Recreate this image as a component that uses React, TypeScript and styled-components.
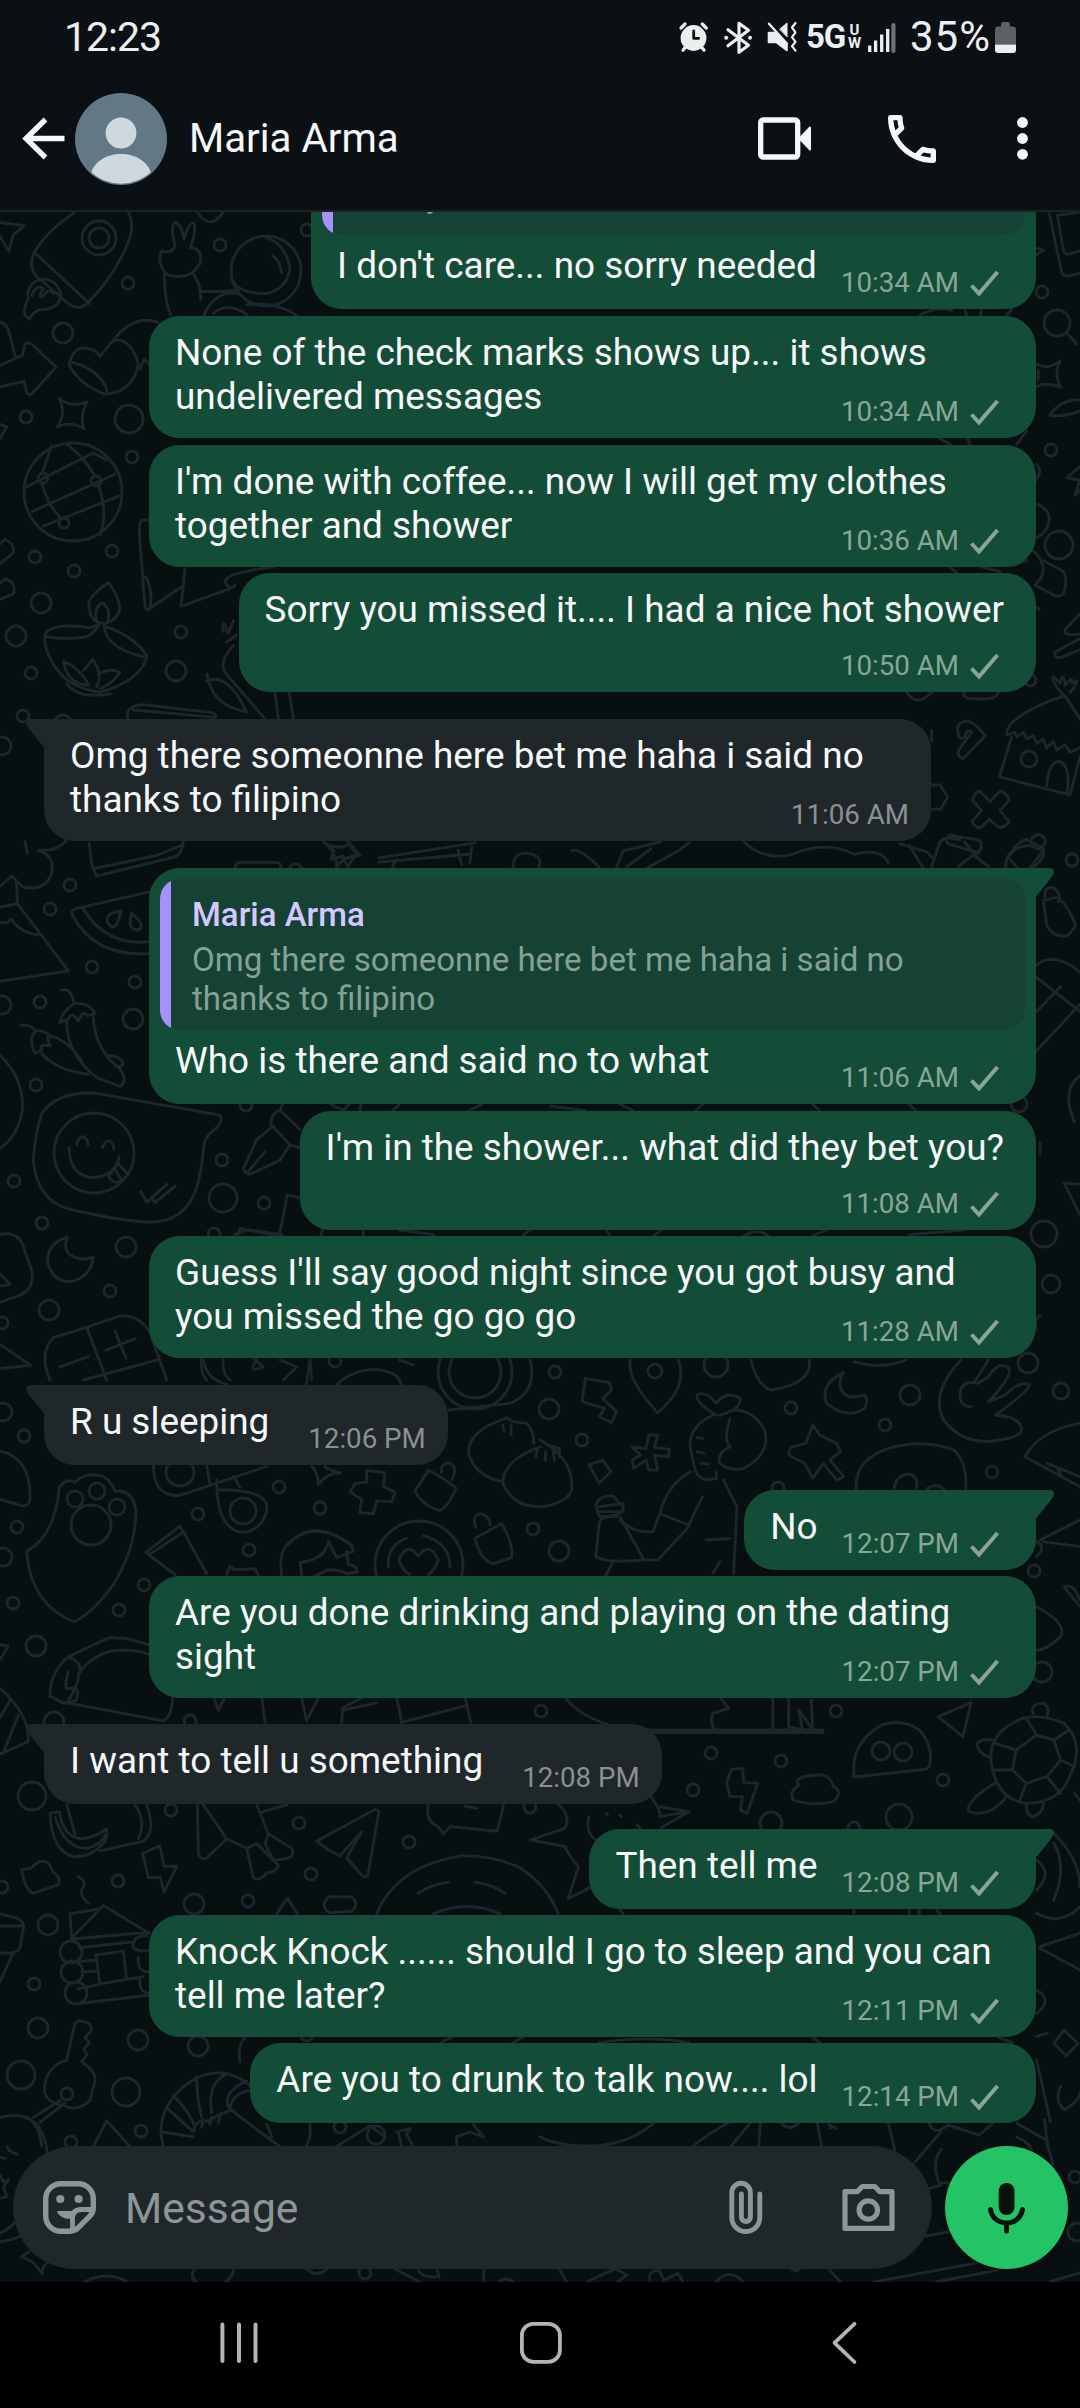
import React from "react";
import styled, { createGlobalStyle, css } from "styled-components";

const color = {
  bar: "#0b1014",
  line: "#1b2226",
  wall: "#070f10",
  doodle: "#1f262b",
  sent: "#144d37",
  received: "#1f272a",
  quote: "#154234",
  accent: "#a791ff",
  quoteName: "#d3c8ff",
  sentMeta: "#88a698",
  receivedMeta: "#8b9092",
  white: "#f7f8fa",
  inputIcon: "#8d9598",
  green: "#24c366",
};

const GlobalStyle = createGlobalStyle`
  * { box-sizing: border-box; }
  body { margin: 0; background: #000; font-family: Roboto, "Liberation Sans", sans-serif; }
  svg { display: block; flex: none; }
`;

const Screen = styled.main`
  display: flex;
  flex-direction: column;
  width: 1080px;
  height: 2408px;
  overflow: hidden;
`;

/* ---------- status bar ---------- */

const TopArea = styled.header`
  flex: none;
  height: 212px;
  background: ${color.bar};
  border-bottom: 2px solid ${color.line};
`;

const StatusBar = styled.div`
  display: flex;
  align-items: center;
  justify-content: space-between;
  height: 74px;
  padding: 0 64px 0 64px;
  color: #eceeef;
`;

const Clock = styled.span`
  font-size: 41px;
  line-height: 48px;
  letter-spacing: -1px;
`;

const Battery = styled.span`
  margin-left: 14px;
  margin-right: 4px;
  font-size: 42px;
  line-height: 48px;
  letter-spacing: 1px;
  white-space: nowrap;
`;

const StatusIcons = styled.div`
  display: flex;
  align-items: center;
`;

const Network = styled.div`
  display: flex;
  align-items: center;
  margin-left: 10px;
  margin-right: 6px;
`;

const NetworkName = styled.span`
  font-size: 33px;
  font-weight: 700;
  line-height: 34px;
  letter-spacing: -1.2px;
`;

const NetworkSuffix = styled.span`
  display: flex;
  flex-direction: column;
  align-items: center;
  width: 15px;
  margin-left: 2px;
  font-size: 15px;
  font-weight: 700;
  line-height: 13px;
`;

/* ---------- conversation header ---------- */

const ContactBar = styled.div`
  display: flex;
  align-items: center;
  height: 129px;
  padding: 0 52px 0 23px;
`;

const ContactName = styled.h1`
  flex: 1;
  margin: 0 0 0 22px;
  color: ${color.white};
  font-size: 40.3px;
  font-weight: 400;
  line-height: 48px;
`;

const Actions = styled.div`
  display: flex;
  align-items: center;
`;

/* ---------- conversation ---------- */

const Conversation = styled.section`
  position: relative;
  display: flex;
  flex-direction: column;
  flex: none;
  height: 2070px;
  overflow: hidden;
  background: ${color.wall};
`;

const WallpaperSvg = styled.svg`
  position: absolute;
  inset: 0;
  fill: none;
  stroke: ${color.doodle};
  stroke-width: 2.9;
  stroke-linecap: round;
  stroke-linejoin: round;
  path { vector-effect: non-scaling-stroke; }
`;

const Messages = styled.div`
  position: relative;
  display: flex;
  flex: 1;
  flex-direction: column;
  justify-content: flex-end;
  min-height: 0;
  padding: 0 44px 23px;
`;

const Bubble = styled.article<{ $sent: boolean; $wide: boolean; $tail: boolean; $gap: number }>`
  position: relative;
  flex: none;
  align-self: ${(p) => (p.$sent ? "flex-end" : "flex-start")};
  width: ${(p) => (p.$wide ? "887px" : "auto")};
  margin-top: ${(p) => p.$gap}px;
  border-radius: 31px;
  background: ${(p) => (p.$sent ? color.sent : color.received)};
  ${(p) => p.$tail && (p.$sent ? css`border-top-right-radius: 0;` : css`border-top-left-radius: 0;`)}
`;

const Tail = styled.svg<{ $sent: boolean }>`
  position: absolute;
  top: 0;
  ${(p) =>
    p.$sent
      ? css`left: 100%; margin-left: -1px; fill: ${color.sent};`
      : css`right: 100%; margin-right: -1px; fill: ${color.received}; transform: scaleX(-1);`}
`;

const QuoteHolder = styled.div`
  padding: 11px 11px 0;
`;

const Quote = styled.blockquote`
  margin: 0;
  padding: 17px 20px 12px 32px;
  border-radius: 20px;
  background: linear-gradient(to right, ${color.accent} 11px, ${color.quote} 11px);
`;

const QuoteName = styled.div`
  color: ${color.quoteName};
  font-size: 33px;
  font-weight: 500;
  line-height: 38px;
`;

const QuoteText = styled.p<{ $lines: number }>`
  margin: 6px 0 ${(p) => (p.$lines === 1 ? 8 : 0)}px;
  color: #84a193;
  font-size: 33.1px;
  line-height: 39px;
  white-space: pre-line;
`;

type Layout = "inline" | "stack";

const Body = styled.div<{ $quoted: boolean; $sent: boolean }>`
  display: flex;
  flex-direction: column;
  padding: ${(p) => (p.$quoted ? 9 : 15)}px ${(p) => (p.$sent ? 32 : 17)}px 10px 26px;
`;

const Line = styled.span`
  color: ${color.white};
  font-size: 36.9px;
  line-height: 44px;
  white-space: pre;
`;

const LastRow = styled.div<{ $layout: Layout; $sent: boolean; $multiline: boolean }>`
  display: flex;
  flex-direction: ${(p) => (p.$layout === "stack" ? "column" : "row")};
  justify-content: space-between;
  gap: ${(p) => (p.$layout === "stack" ? 18 : p.$sent ? 24 : 39)}px;
  height: ${(p) => (p.$layout === "stack" ? "auto" : p.$multiline ? "53px" : "55px")};
`;

const Meta = styled.div<{ $sent: boolean }>`
  display: flex;
  align-self: flex-end;
  align-items: center;
  gap: 11px;
  height: 32px;
  margin-right: 5px;
  color: ${(p) => (p.$sent ? color.sentMeta : color.receivedMeta)};
  font-size: 27.7px;
  line-height: 32px;
  white-space: nowrap;
`;

/* ---------- composer ---------- */

const Composer = styled.footer`
  position: relative;
  display: flex;
  flex: none;
  align-items: center;
  gap: 13px;
  height: 136px;
  padding: 0 12px 13px 13px;
`;

const InputPill = styled.div`
  display: flex;
  flex: none;
  align-items: center;
  width: 919px;
  height: 123px;
  padding: 0 37px 0 30px;
  border-radius: 62px;
  background: ${color.received};
`;

const Placeholder = styled.span`
  flex: 1;
  margin-left: 29px;
  color: ${color.inputIcon};
  font-size: 42.6px;
  line-height: 50px;
`;

const MicButton = styled.button`
  display: flex;
  align-items: center;
  justify-content: center;
  width: 123px;
  height: 123px;
  padding: 0;
  border: 0;
  border-radius: 50%;
  background: ${color.green};
  box-shadow: 0 2px 5px rgba(0, 0, 0, 0.4);
`;

const NavBar = styled.nav`
  display: flex;
  flex: 1;
  align-items: center;
  gap: 262px;
  padding: 0 0 5px 220px;
  background: #000;
`;

/* ---------- icons ---------- */

const IconSvg = styled.svg<{ $ml?: number }>`
  margin-left: ${(p) => p.$ml ?? 0}px;
  overflow: visible;
`;

type IconProps = { box: [number, number, number, number]; ml?: number; children: React.ReactNode };
const Icon = ({ box, ml, children }: IconProps) => (
  <IconSvg $ml={ml} width={box[2]} height={box[3]} viewBox={box.join(" ")} fill="none" strokeLinecap="round" strokeLinejoin="round">
    {children}
  </IconSvg>
);

const ink = "#eceeef";

const AlarmIcon = () => (
  <Icon box={[676, 22, 29, 30]}>
    <circle cx="690.5" cy="38" r="12.9" fill={ink} />
    <path d="M678 28l4-4M703.3 28l-4-4M680 50.3l3-4M701 50.3l-3-4" stroke={ink} strokeWidth="3.2" />
    <path d="M690.7 31v7.3h5" stroke={color.bar} strokeWidth="2.8" />
  </Icon>
);

const BluetoothIcon = () => (
  <Icon box={[721, 21, 28, 31]} ml={16}>
    <path d="M725 28.7l20.5 15.6-9.5 6.9V22.3l9.5 6.9L725 44.8" stroke={ink} strokeWidth="3.2" />
    <circle cx="723.2" cy="36.8" r="2" fill={ink} />
    <circle cx="747" cy="36.8" r="2" fill={ink} />
  </Icon>
);

const MuteIcon = () => (
  <Icon box={[764, 22, 29, 30]} ml={15}>
    <path d="M765.5 32.5h7l11.5 12v6l-10.5-8h-8z" fill={ink} stroke={ink} strokeWidth="1.6" />
    <path d="M777 29l7-6v13.5z" fill={ink} stroke={ink} strokeWidth="1" />
    <path d="M766 23.7l18 20" stroke={ink} strokeWidth="2.4" />
    <path d="M792.5 23l-3.5 4.5 3.5 4.8-3.5 4.8 3.5 4.8-3.5 4.2 3.5 4.6" stroke={ink} strokeWidth="2.2" />
  </Icon>
);

const SignalIcon = () => (
  <Icon box={[864.4, 22, 28, 29]}>
    <path d="M866.1 51v-6.4M872 51V39.5M878.1 51V33.5M884.1 51V28" stroke={ink} strokeWidth="3.3" strokeLinecap="butt" />
    <path d="M889.8 50V24" stroke="#6e7274" strokeWidth="4.2" />
  </Icon>
);

const BatteryIcon = () => (
  <Icon box={[995, 21.5, 21, 31]}>
    <path d="M1001 26v-2q0-2.5 2.5-2.5h4q2.500 0 2.500 2.500v2h3q3 0 3 3v15h-21V29q0-3 3-3z" fill="#5d6163" />
    <path d="M995 44h21v5.5q0 3-3 3h-15q-3 0-3-3z" fill={ink} />
  </Icon>
);

const BackIcon = () => (
  <Icon box={[23, 117, 43, 43]}>
    <path d="M64.5 138.5H26M45.5 119.5l-19.5 19 19.5 19" stroke={color.white} strokeWidth="5.3" strokeLinecap="butt" strokeLinejoin="miter" />
  </Icon>
);

const Avatar = () => (
  <Icon box={[75, 92, 92, 92]} ml={9}>
    <clipPath id="avatarClip"><circle cx="121" cy="138" r="44.7" /></clipPath>
    <circle cx="121" cy="138" r="46" fill="#627884" />
    <circle cx="121" cy="132" r="15.4" fill="#cfd8df" />
    <path clipPath="url(#avatarClip)" d="M91 172c3-11 15-19 30-19s27 8 30 19v14H91z" fill="#cfd8df" />
  </Icon>
);

const VideoIcon = () => (
  <Icon box={[758, 117, 54, 43]}>
    <rect x="760.7" y="120" width="37" height="37" rx="2.5" stroke={color.white} strokeWidth="5.3" />
    <path d="M800 136.5l9-9.5q2-1.5 2 1v21q0 2.5-2 1l-9-9.5z" fill={color.white} />
  </Icon>
);

const PhoneIcon = () => (
  <Icon box={[888, 114, 48, 48]} ml={76}>
    <path
      transform="translate(880 106) scale(2.667)"
      fill={color.white}
      d="M6.54 5c.06.89.21 1.76.45 2.59l-1.2 1.2c-.41-1.2-.67-2.47-.76-3.79h1.51m9.86 12.02c.85.24 1.72.39 2.6.45v1.49c-1.32-.09-2.59-.35-3.8-.75l1.2-1.19M7.5 3H4c-.55 0-1 .45-1 1 0 9.39 7.61 17 17 17 .55 0 1-.45 1-1v-3.49c0-.55-.45-1-1-1-1.24 0-2.45-.2-3.57-.57-.1-.04-.21-.05-.31-.05-.26 0-.51.1-.71.29l-2.2 2.2c-2.83-1.45-5.15-3.76-6.59-6.59l2.2-2.2c.28-.28.36-.67.25-1.02C8.7 6.45 8.5 5.25 8.5 4c0-.55-.45-1-1-1z"
    />
  </Icon>
);

const MoreIcon = () => (
  <Icon box={[1017, 117, 11, 43]} ml={81}>
    {[122.5, 138.5, 154.3].map((y) => <circle key={y} cx="1022.5" cy={y} r="5.4" fill={color.white} />)}
  </Icon>
);

const Tick = () => (
  <Icon box={[0, 0, 29, 26]}>
    <path d="M1.5 15.5l7.5 8L27.5 2" stroke={color.sentMeta} strokeWidth="4" strokeLinecap="butt" strokeLinejoin="miter" />
  </Icon>
);

const StickerIcon = () => (
  <Icon box={[43, 2182, 53, 53]}>
    <g stroke={color.inputIcon} strokeWidth="5.4">
      <path d="M61 2184.7h17.3a15 15 0 0 1 15 15v9q0 5-3.5 8.5l-11.5 11.5q-3.6 3.6-8.5 3.6H61a15.3 15.3 0 0 1-15.3-15.3V2200A15.3 15.3 0 0 1 61 2184.7z" />
      <path d="M92.5 2210.5h-11q-9 0-9 9v11" strokeWidth="4.8" />
    </g>
    <circle cx="60.3" cy="2200" r="4.1" fill={color.inputIcon} />
    <circle cx="78.6" cy="2200" r="4.1" fill={color.inputIcon} />
    <path d="M58.5 2212h16l-3 7.5q-8.5 1.5-14-5.5-1-1.8 1-2z" fill={color.inputIcon} />
  </Icon>
);

const ClipIcon = () => (
  <Icon box={[729, 2181, 34, 53]}>
    <path d="M759.8 2194v23.5a14 14 0 0 1-28 0v-25a9.3 9.3 0 0 1 18.6 0V2217a4.5 4.5 0 0 1-9 0v-23" stroke={color.inputIcon} strokeWidth="4.9" />
  </Icon>
);

const CameraIcon = () => (
  <Icon box={[842, 2182, 53, 53]} ml={79}>
    <g stroke={color.inputIcon} strokeWidth="5.2">
      <path d="M845 2192.7h12.2l5-5.2h12.6l5 5.2H892v36.7h-47z" />
      <circle cx="868.3" cy="2211" r="9.2" />
    </g>
  </Icon>
);

const MicIcon = () => (
  <Icon box={[988, 2182, 37, 50]}>
    <rect x="998.7" y="2182" width="15.8" height="32" rx="7.9" fill="#06130d" />
    <path d="M990.5 2208.5c1.5 8.5 8 13.5 16 13.5s14.5-5 16-13.5M1006.5 2222v8" stroke="#06130d" strokeWidth="5" />
  </Icon>
);

const navInk = "#b4b4b4";
const RecentsIcon = () => (
  <Icon box={[220, 2322, 38, 42]}>
    <path d="M222.4 2324.5v36.5M239 2324.5v36.5M255.5 2324.5v36.5" stroke={navInk} strokeWidth="4" />
  </Icon>
);
const HomeIcon = () => (
  <Icon box={[520, 2322, 42, 42]}>
    <rect x="521.9" y="2323.8" width="38" height="38" rx="11.5" stroke={navInk} strokeWidth="3.8" />
  </Icon>
);
const NavBackIcon = () => (
  <Icon box={[824, 2322, 33, 42]}>
    <path d="M854.5 2323.8l-20 19 20 19.2" stroke={navInk} strokeWidth="3.8" />
  </Icon>
);

/* ---------- wallpaper ---------- */

const dots: [number, number, number][] = [
  [128, 283, 6], [63, 333, 10], [129, 419, 14], [26, 417, 6], [132, 457, 6], [35, 557, 6], [112, 551, 6], [74, 571, 6],
  [41, 603, 10], [16, 636, 10], [181, 632, 6], [31, 673, 6], [176, 671, 10], [23, 716, 6], [63, 724, 9], [220, 245, 6],
  [307, 230, 6], [73, 492, 49], [2, 746, 9], [99, 238, 17], [99, 238, 10], [266, 271, 35], [43, 478, 5], [96, 481, 5],
  [64, 523, 5], [70, 885, 6], [50, 909, 6], [92, 967, 6], [135, 982, 6], [40, 1002, 6], [133, 1019, 10], [36, 1085, 6],
  [222, 1160, 6], [223, 1198, 14], [264, 1203, 6], [14, 1181, 6], [42, 1223, 6], [126, 1247, 10], [110, 1291, 6],
  [49, 1310, 10], [2, 1005, 9], [214, 1234, 6], [2, 1323, 6], [246, 1105, 6], [94, 1153, 40], [335, 1361, 6],
  [24, 1436, 6], [17, 1527, 6], [198, 1514, 6], [279, 1487, 6], [320, 1508, 6], [249, 1550, 6], [144, 1585, 6],
  [13, 1603, 6], [119, 1610, 6], [36, 1646, 10], [3, 1557, 9], [3, 1412, 9], [54, 1722, 10], [190, 1721, 6],
  [32, 1796, 14], [171, 1810, 6], [299, 1823, 6], [409, 1842, 6], [311, 1874, 6], [118, 1881, 6], [194, 1904, 10],
  [248, 1901, 6], [48, 1925, 10], [34, 1984, 6], [38, 2028, 10], [138, 2040, 10], [198, 2046, 10], [21, 2075, 14],
  [126, 2092, 14], [141, 2131, 6], [71, 2142, 6], [180, 1472, 14], [243, 1511, 13], [419, 1565, 44], [2, 1887, 6],
  [307, 2035, 6], [376, 2135, 9], [340, 2127, 6], [75, 1499, 8], [97, 1491, 8], [117, 1507, 8], [91, 1525, 20],
  [71, 1952, 11], [72, 1972, 11], [76, 1993, 11], [67, 2094, 6], [1042, 292, 6], [1057, 323, 13], [1051, 450, 6],
  [1059, 545, 14], [1029, 759, 8], [1072, 860, 6], [1030, 680, 6], [582, 1440, 6], [549, 1409, 10], [555, 1372, 6],
  [655, 1371, 7], [791, 1408, 6], [910, 1395, 10], [885, 1425, 6], [992, 1472, 6], [1061, 1391, 8], [716, 1365, 12],
  [1028, 1363, 10], [533, 1529, 6], [559, 1551, 10], [1034, 1571, 6], [541, 1711, 6], [836, 1711, 6], [1042, 1672, 10],
  [778, 1488, 6], [711, 1753, 6], [781, 1761, 6], [693, 1790, 6], [943, 1780, 6], [899, 1817, 13], [854, 1828, 6],
  [881, 1751, 9], [903, 1752, 9], [530, 1807, 6], [771, 1823, 11], [1044, 1234, 13], [1051, 1284, 9], [1019, 1104, 8],
  [1075, 2177, 6], [1077, 2232, 9], [365, 2273, 6], [475, 1372, 26], [475, 1372, 37],
];

type Patch = { x: number; y: number; sx: number; sy: number; d: string[] };

const patches: Patch[] = [
  {
    x: 0, y: 210, sx: 3, sy: 2.8,
    d: [
      // rocket
      "M225 6Q140 60 103 118Q85 150 105 182L205 262Q240 285 265 258Q340 190 385 90Q405 40 385 6M103 118L268 262",
      "M105 200Q165 180 182 235Q180 275 135 278Q105 275 88 305Q60 290 85 250Q75 225 105 200M95 240Q110 205 130 220Q110 250 130 240Q150 215 160 235",
      "M0 35L73 44L40 70L26 115L0 75M590 5Q630 60 668 8",
      // astronaut
      "M512 295Q490 240 494 175Q470 140 485 115Q515 125 525 100Q510 40 525 35Q545 40 552 82Q565 35 580 36Q592 45 572 105Q610 110 600 150Q575 190 530 186Q505 185 494 175M580 178Q605 215 602 250M606 228H660L716 225M612 293Q650 220 716 235M700 200Q720 235 800 234Q860 220 870 165Q860 95 795 75M818 128Q840 140 845 175M640 290Q680 255 740 292M740 265Q830 255 890 295",
      // arrow, mug, star
      "M0 435L68 406L75 375Q85 370 95 375L168 440L95 515Q85 520 80 510L72 480L0 495M0 315Q20 315 28 345L45 408",
      "M213 415Q225 385 255 386Q290 390 300 410L340 365Q390 355 415 430Q400 510 315 516Q240 490 208 435Q210 420 213 415M208 425Q290 440 320 500V516M340 365Q400 290 475 315M420 445L432 418L447 432",
      "M178 528Q215 555 262 537Q238 575 252 612Q210 590 172 607Q200 570 178 528M0 600L20 607L0 640",
      // globe
      "M80 775L280 680L320 700M95 845L345 740M130 885L360 800M155 660L125 740M125 765Q145 830 185 865M200 655Q250 690 285 745M295 770Q325 850 300 910",
      "M0 935L15 922Q45 935 40 960L0 990M0 1045L18 1032Q50 1045 40 1075L0 1090",
      // open book
      "M447 868H425Q415 880 420 930L435 1110Q440 1125 450 1115L545 1055M555 1005L543 1110L690 1060M430 1060Q425 1020 440 1030Q460 1080 450 1115M675 1040Q680 1015 820 1000M675 1040Q690 1070 705 1050",
      // oil lamp
      "M270 1120Q250 1090 325 1043Q370 1100 355 1130Q330 1165 295 1155Q270 1145 270 1120M290 1150Q280 1110 308 1100Q335 1120 322 1155M298 1160L270 1170Q180 1155 140 1180Q120 1210 165 1280Q210 1340 300 1350Q420 1320 442 1250Q400 1190 312 1165M140 1195Q200 1205 260 1195Q290 1180 298 1160M312 1165Q320 1230 440 1253M190 1265Q205 1330 265 1330Q240 1280 190 1265M250 1290L278 1258Q310 1300 290 1335M295 1300Q330 1280 360 1295Q340 1325 300 1340M200 1325Q230 1370 330 1355",
      "M383 1425V1405Q395 1385 430 1385L640 1408Q655 1420 640 1425M400 1400L640 1420M670 1180Q665 1155 675 1160L685 1185L700 1150M680 1210L710 1190M700 1220Q650 1270 680 1300L795 1425M620 1320Q680 1290 740 1405Q650 1390 630 1330L620 1300M825 1350L835 1425M868 1350L880 1425",
    ],
  },
  {
    x: 0, y: 840, sx: 3, sy: 2.9037,
    d: [
      "M115 30Q165 45 155 95Q140 150 70 137L35 105L0 135M75 5L82 38M200 0Q170 35 115 30M50 125L52 185L205 380Q100 395 0 410M0 195L52 185M0 240H20L35 230Q60 270 115 275",
      "M268 10L275 70L290 105L520 50Q545 45 550 5M285 82L470 45L545 15",
      // watermelon
      "M450 150L225 200Q210 205 218 220Q285 340 447 330M250 200Q320 310 447 295M330 215L362 205Q355 255 335 252Q310 235 330 215M395 212Q440 250 415 260Q380 265 395 212",
      // peppers
      "M185 435Q215 430 222 475Q185 500 180 530L205 520Q215 495 235 525Q250 490 262 510L285 505Q270 470 222 475M200 530Q200 620 290 690L360 715Q385 700 360 665Q285 610 280 515M63 538Q95 535 105 555Q85 580 105 620L125 610Q115 590 150 598Q135 560 155 572Q130 550 105 555M125 620Q170 670 265 680M155 570Q200 580 245 640M320 625Q360 625 370 650Q365 662 345 655",
      "M0 625Q70 690 68 780Q55 860 0 895",
      // smiling sticker
      "M285 735L655 798Q675 805 650 835Q615 860 612 885Q605 960 590 1010Q555 1110 450 1110Q350 1105 200 1070Q110 1040 100 930Q105 850 125 795Q170 730 285 735M207 895Q210 980 285 980Q350 970 357 920M230 885Q235 860 250 862Q265 870 265 888M308 892Q315 872 330 874Q340 882 342 898M325 975L355 940L383 970Q350 1015 325 975M345 955L362 985M422 1020L440 1052L500 1000M465 1053L525 1005M465 1053L458 1045",
      // pen
      "M820 830L770 870L730 955Q740 975 755 968L840 930L870 885L812 825Q815 790 840 785L900 840M745 962L795 905M870 885L900 895M840 785L848 765M1030 785L1050 765M1080 785L1085 765",
      "M978 12Q1020 30 1050 10Q1055 35 1080 45Q1030 45 1010 78Q1010 40 978 12M705 82Q705 65 725 65H825Q845 65 842 82M868 82Q885 55 907 82",
      "M900 1040L862 1030L838 1148M712 1150L720 1128L840 1150M968 1130L962 1150M1090 1130V1150",
      // moon, gift
      "M197 1155Q145 1170 142 1220Q155 1285 215 1282Q270 1270 280 1212Q235 1225 205 1200Q190 1180 202 1155Z",
      "M0 1145Q55 1135 70 1180L95 1250Q105 1310 50 1325L0 1342M0 1260L30 1290L0 1295M0 1465L92 1525L0 1535",
      "M150 1568Q115 1490 160 1445L260 1415L360 1382Q420 1380 450 1430L500 1568M260 1415L320 1568M180 1530L265 1500M345 1425L378 1505M318 1482L405 1448M250 1568L470 1510",
      "M605 1505Q600 1550 620 1568M670 1505Q665 1550 690 1568M760 1505L790 1530Q740 1550 770 1510M840 1510L890 1530L850 1568M930 1505L935 1568",
    ],
  },
  {
    x: 0, y: 1400, sx: 3, sy: 2.063,
    d: [
      "M0 105Q95 120 90 205Q85 225 50 215L0 205",
      // bear paw
      "M80 312Q165 280 178 180Q200 160 225 170Q255 150 290 155Q325 155 345 188Q400 185 408 230Q405 310 340 380Q285 435 222 458Q90 420 80 312",
      // camera and pencil
      "M460 135Q460 200 540 197L800 137M620 135L630 175M650 165Q650 230 680 255Q715 285 765 265Q805 245 800 215Q785 185 655 185M700 158L720 180",
      "M437 315L540 260L620 358M437 315L525 360M450 318L545 275",
      // girl, heart badge
      "M845 360Q835 320 860 300Q940 240 1055 300L1060 312L1010 325L985 292Q975 330 900 335L905 360M1040 312L1045 340Q1070 340 1072 355L1040 358Q1020 350 985 350L940 365M680 360L690 343L705 350L765 348L775 362",
      "M1165 345Q1160 300 1220 285M1270 280Q1350 295 1350 345M1255 322Q1220 290 1197 330Q1210 355 1230 360M1255 322Q1290 290 1315 330Q1305 350 1285 360",
      "M935 137Q955 150 955 175Q980 150 1022 150Q985 145 975 137",
      "M1100 145L1155 150L1150 178L1185 190L1175 210L1130 208L1120 235L1080 232L1085 205L1050 190L1065 172L1100 170Z",
      "M1285 145L1245 188Q1270 220 1320 228Q1345 220 1368 182Q1330 160 1285 145M1325 150Q1320 130 1350 130Q1375 140 1355 165",
      "M1425 285L1505 255Q1540 295 1535 325L1480 338Q1440 330 1425 285M1427 262Q1415 235 1445 235Q1470 240 1470 258",
      // taco
      "M150 612Q150 560 205 530L250 515Q280 505 330 490L380 492L447 505M205 620Q240 580 235 565Q270 530 330 518Q400 512 447 525M180 622L150 610M180 622L490 662Q515 655 518 613M205 560Q190 600 205 595Q245 590 228 620Q185 630 180 622M205 530Q245 540 240 560",
      "M0 505L25 508L0 535M0 595Q90 650 85 705L0 730M0 655L30 620M10 728L55 650M640 613L655 640L675 613M785 613L795 665M905 615L920 662L955 615M1025 665L1028 635L1090 613M1030 640L1128 625M1190 613L1205 665L1400 630M1395 613L1412 665",
      // banana, rocket tail, plane
      "M200 835L225 895M150 852L178 850Q190 905 250 905Q290 900 320 885Q325 900 310 915Q270 945 220 942Q155 930 150 852M165 860Q195 925 260 925Q300 920 318 895M405 835Q440 870 415 905M440 835Q470 890 430 910L300 930",
      "M592 835L595 935Q600 950 620 945L680 905L610 835M680 905L740 925L760 985Q780 995 800 975Q830 975 835 960L770 915L740 925M770 835L805 895L875 925Q885 940 865 945L820 950L795 915L805 895M785 850L860 835",
      "M950 910L1125 845Q1140 845 1135 855L1105 975Q1100 990 1085 980L1040 945L1085 890L1020 940Q985 930 950 910",
      "M65 970L95 965Q120 945 145 955L160 975Q185 985 175 1000L100 1018Q75 1010 65 970M428 935L480 920L492 962L530 962L492 1015L480 985L445 985Z",
      "M235 983Q265 995 245 1010Q240 1025 265 1038M1130 1060Q1190 960 1390 940Q1480 940 1560 965Q1640 1000 1675 1060M1255 1018Q1290 1000 1345 995M1425 995Q1480 1000 1515 1018M1300 1060Q1400 1030 1500 1060M830 1060L862 1028L892 1060M980 1030Q985 1022 1010 1025H1055Q1080 1040 1055 1055L990 1058Q960 1045 980 1030M1285 835Q1275 870 1315 880L1330 895L1350 880L1490 890Q1505 860 1510 835M1395 838L1430 842",
      // cabin
      "M215 1110L310 1043L447 1100M210 1060L295 1050M210 1058L215 1112L447 1098M238 1130L400 1118M215 1160L290 1155M245 1180L290 1178M288 1145L370 1137L380 1195L300 1205ZM235 1215L300 1205M380 1195L430 1190M235 1245L447 1228M440 1105Q395 1105 400 1130Q420 1140 445 1135M415 1150Q410 1180 447 1180M420 1195Q415 1220 447 1225M0 1060L55 1070Q75 1080 70 1090L60 1130Q50 1145 0 1140M0 1085L65 1085M0 1200L40 1140",
      // key
      "M225 1285Q240 1275 270 1288L275 1300L255 1315L268 1325L252 1340L262 1350L245 1365Q290 1385 285 1405L270 1445Q230 1470 190 1455Q140 1450 133 1425Q135 1375 200 1362ZM195 1450L120 1490M180 1445L100 1480M0 1480Q90 1465 125 1510Q145 1540 140 1568M85 1480Q120 1500 125 1540",
      // croissant
      "M490 1540Q465 1480 530 1430Q600 1380 680 1390Q740 1400 760 1425M520 1435Q570 1470 585 1500M590 1395Q590 1440 605 1480M680 1390Q620 1410 635 1470M740 1405Q660 1430 690 1465M485 1510L580 1520M500 1460L580 1510Q590 1480 625 1488L655 1475L695 1465Q740 1490 840 1540M610 1485L605 1500M635 1480L630 1495M660 1478L655 1492M690 1460Q700 1430 745 1425M720 1365Q710 1335 735 1315M800 1495L815 1520L805 1500M930 1495Q935 1530 910 1545M280 1540L320 1487L390 1540M1010 1540L1110 1497L1155 1520M1190 1510L1230 1503L1220 1515L1240 1540M1195 1512L1205 1540M1370 1540V1520L1410 1510L1450 1520L1420 1495",
    ],
  },
  {
    x: 900, y: 210, sx: 3, sy: 2.24,
    d: [
      "M448 8L485 140Q490 150 510 147L540 142M472 12L490 90Q495 102 510 98L540 92M540 5L472 12M408 85L430 90L410 100M500 275L530 300M60 235Q110 215 155 225M195 222L200 236M245 222L240 236M320 236L335 222",
      "M410 345Q445 360 480 338Q460 370 483 397Q440 385 410 395M415 360V380M540 425Q480 425 450 460Q490 465 540 450M540 575L500 600L540 605L525 638L540 628",
      "M408 570Q430 580 408 605M408 658Q450 670 448 695Q440 725 408 735M382 765Q410 755 430 800Q430 825 410 835M430 785L490 810Q505 830 490 860Q475 870 455 860L405 840M380 785L340 797M150 800L170 812M240 798L300 810",
      "M540 905L495 940Q490 955 540 950M540 960L465 990Q462 1008 490 1000L540 985M408 890L418 895M20 1080Q50 1115 95 1080M190 1080Q190 1095 220 1095H260Q290 1095 295 1080M110 508L150 525M200 508L210 525M380 495L350 525",
      // hut
      "M495 1090Q450 1055 460 1045L480 1060Q490 1030 495 1065Q520 1040 515 1060L530 1055Q525 1070 510 1080M495 1088Q400 1110 340 1145Q320 1160 320 1175L345 1170L350 1180L370 1170L380 1185L400 1178L410 1195L430 1185L440 1205L460 1190L470 1210L495 1198L510 1215L540 1205M495 1088L540 1140M335 1180L298 1270L510 1310L540 1225M440 1290Q445 1235 480 1235Q515 1250 500 1308",
      "M175 1175Q165 1145 205 1145Q235 1155 255 1178L190 1228Q165 1225 180 1205L215 1170Q200 1160 195 1180Q180 1190 175 1175M95 1165L95 1190",
      "M92 1288H120L143 1315L122 1342H92M240 1302L270 1325L300 1302Q320 1305 327 1322L300 1345L327 1370Q315 1385 295 1382L268 1365L240 1385Q220 1380 215 1370L245 1345L217 1322Q225 1302 240 1302",
      "M95 1470L120 1415Q140 1400 170 1410L180 1410M150 1400L240 1412Q250 1430 235 1440L145 1420Q130 1410 150 1400M175 1470L220 1445L265 1470M0 1420L80 1438L95 1450M325 1450Q350 1415 380 1410L430 1430Q440 1450 400 1472M325 1450L350 1472M395 1408Q415 1390 435 1408Q440 1425 415 1428M435 1540Q430 1515 460 1518Q485 1530 475 1550",
    ],
  },
  {
    x: 0, y: 840, sx: 1.4519, sy: 2.8,
    d: [
      "M470 5L485 30L480 55L498 45L505 75L515 45L522 42L505 5M550 50L690 8M550 62L680 40M570 75L575 55M665 28L670 68M685 20L682 65M745 78Q745 30 770 38Q790 50 782 78M830 30Q840 20 870 76M895 76L905 30L960 5M910 75L945 25M940 78L985 30L1000 8M1080 5Q1110 60 1150 40Q1200 0 1240 40Q1280 20 1290 65M1320 15L1340 78M1400 5L1425 60M1460 78Q1460 20 1495 15L1515 30L1495 78",
      "M1515 170L1535 160Q1550 180 1562 240L1550 268Q1530 275 1520 240ZM1505 350Q1530 310 1568 370M1505 385L1568 480M1505 590L1568 460M1505 480L1540 410M1568 660Q1540 700 1560 790M1545 960L1568 1050M1545 960L1568 965M1510 850V880M1510 1330Q1500 1350 1505 1370",
      "M480 740L500 758M580 740L570 758M700 740L680 758M800 745L850 758M900 740L920 758M1020 740L1010 758M1180 740L1190 758M1320 740L1330 758M340 1105L360 1092L410 1105M580 1092L630 1105M760 1105L770 1092M880 1092L885 1108M960 1092L950 1108M1080 1108Q1100 1085 1115 1108M1200 1092L1180 1108M1320 1105L1400 1092",
    ],
  },
  {
    x: 0, y: 1360, sx: 1.4519, sy: 3,
    d: [
      "M295 0Q300 60 330 73M450 0L445 73M490 73Q510 30 545 28Q580 35 582 73M580 0L600 15M770 0Q780 100 740 130L652 150M915 0Q910 60 955 158Q1000 80 985 0M1090 0Q1100 80 1120 90Q1180 70 1175 0M1240 5Q1280 30 1315 0",
      "M850 55L885 68L888 90L875 115L895 155L888 188L870 170L878 145L845 125Z",
      // moon, hand
      "M1225 38Q1190 70 1200 130Q1230 180 1255 145Q1262 120 1255 105Q1225 125 1220 80Q1218 50 1225 38M1395 0Q1350 100 1370 180Q1400 260 1450 240Q1485 230 1483 205Q1480 170 1445 165Q1490 100 1495 75Q1480 60 1460 105L1435 125Q1470 50 1465 25Q1450 0 1435 50L1420 70Q1400 60 1395 90Q1390 140 1410 140M1435 0L1415 65",
      // seated girl
      "M1040 165Q1010 130 1012 105Q1025 90 1040 130Q1055 90 1075 115Q1075 150 1045 165M1035 165Q1000 200 1002 260L1008 320Q1010 350 1025 360L1040 355V335M1060 175Q1050 240 1060 260Q1040 280 1045 310Q1060 335 1080 325Q1120 280 1110 210Q1095 150 1065 150M1012 232L1020 235M1012 275L1022 280M1018 310L1028 312M1003 335Q970 370 958 460L1000 495L1020 410M960 450L948 515Q920 520 900 480M900 470L935 600L955 600L1000 500M1050 360L1070 440L1065 640M1025 540L1060 535M870 490L865 590Q880 610 935 600M870 490Q870 470 895 470M865 435Q870 405 890 408L905 440Q905 470 870 470ZM870 440L905 430M868 455L905 455M890 605L880 645M1045 605L1035 640",
      // dumplings
      "M735 175Q680 210 680 280Q690 350 730 365M735 172L745 185L765 190Q775 210 775 250M785 260Q730 300 730 370Q745 445 790 440Q835 420 830 370Q830 310 800 262M785 240L795 255L812 265V290M730 195L732 215M742 195V225M780 270L778 290M792 275V300M803 270L805 300",
      "M918 262L938 265L942 225L955 225L950 262L972 268L970 290L950 285L955 330L942 330L938 300L920 325L918 300L930 285Z",
      "M855 315L875 300L887 335L870 370Z",
      "M1180 195L1190 225L1215 250L1220 275L1205 300L1225 350L1215 360L1195 310L1180 355L1168 310L1145 285L1148 262L1170 250ZM1243 388Q1240 300 1290 265Q1340 235 1385 270Q1405 310 1402 388M1298 388Q1300 345 1320 342Q1335 350 1330 388M1345 388Q1360 365 1370 388M1568 190Q1510 210 1488 290L1568 380M1520 310L1568 350M1535 325L1540 345",
      "M1505 545Q1520 560 1505 590M1545 680Q1560 670 1568 720M1545 680L1568 740M1505 740Q1550 790 1540 830Q1520 870 1505 870M1510 540L1568 480M1515 545L1568 560",
      "M820 1012Q850 1090 920 1110H1195M940 1118H1195M1045 1012L1058 1045L1035 1060Q1030 1090 1038 1110M1122 1012V1110M1145 1012V1100L1165 1110L1160 1050L1180 1110L1178 1020",
    ],
  },
  {
    x: 0, y: 1700, sx: 1.4519, sy: 3,
    d: [
      "M1410 8L1362 50L1398 110Z",
      // alien
      "M1240 220Q1235 130 1280 75Q1310 55 1335 90Q1355 140 1350 190Q1350 210 1335 210L1245 230Q1235 230 1240 220",
      // turtle
      "M1485 55Q1430 100 1440 200Q1450 300 1490 310Q1540 310 1555 220Q1575 130 1545 70Q1510 40 1485 55M1505 105L1530 120L1540 180L1520 230L1490 250L1470 210L1475 150ZM1505 105L1490 55M1530 120L1552 90M1540 180L1560 200M1520 230L1540 280M1490 250L1480 305M1470 210L1440 210M1475 150L1445 130M1500 40Q1495 10 1515 10Q1525 20 1520 50M1440 120Q1415 115 1420 145Q1430 175 1440 170M1445 250Q1410 290 1405 330Q1415 350 1440 330Q1460 300 1460 290M1490 315Q1490 345 1500 350Q1515 340 1515 310M1560 280L1568 300",
      "M1062 208L1078 205L1080 248L1100 250L1085 340L1075 330L1078 290L1060 290L1055 250ZM1185 225Q1150 230 1160 255Q1145 275 1152 300Q1180 320 1210 305Q1225 275 1210 260Q1205 220 1185 225",
      // sun
      "M810 312Q830 350 820 385L770 420L822 440M820 440Q830 480 840 500L825 595L860 560M855 350Q850 400 865 420M945 290Q960 330 958 350L1000 335L960 383M958 320L1000 335M880 340L882 345M900 345L902 350M925 375L930 385",
      "M1505 480Q1530 520 1505 570M1530 400Q1568 480 1568 560M1530 430Q1550 500 1530 600M1505 640Q1540 680 1568 620M1510 740L1568 700M1510 745L1568 810M1505 870Q1530 900 1505 940M1530 1030L1545 990L1565 1030L1548 1068ZM1505 1010L1520 1000M1540 1160Q1530 1200 1545 1230Q1568 1200 1568 1180M1505 1080L1525 1265",
      "M760 1010L745 1028M870 1028Q940 1005 1000 1028M640 1028L655 1012M1180 1012L1190 1028M1450 1012L1470 1028M900 628L905 643M1240 630V640M1320 630V642M1335 630V642M1360 630L1365 642",
    ],
  },
  {
    x: 0, y: 2120, sx: 2.904, sy: 3,
    d: [
      "M0 340Q30 325 45 305M0 365Q40 360 65 345M62 410L85 395M62 410Q105 425 122 462Q125 435 135 430M0 165L10 185L25 180L10 200L20 230L0 235M0 112L15 115M20 80Q30 100 50 102M245 486Q310 450 370 486M565 446Q550 470 570 486M680 446Q675 470 655 486M890 446Q920 475 950 446M1145 446L1220 486M1215 450Q1225 475 1275 470L1270 450M1405 446V486M1450 484Q1470 470 1490 484",
    ],
  },
  {
    x: 540, y: 2120, sx: 2.904, sy: 3,
    d: [
      "M0 50Q50 78 140 78Q250 78 330 10M445 78Q490 40 545 10M555 78L610 10M640 10L635 78M700 10Q725 35 750 10M805 10L818 78M840 15L860 25M842 25H845M1012 10L1030 90M1130 10Q1145 50 1185 15L1275 45L1315 10M1165 35L1090 125M1385 10L1470 60L1490 135M1465 0L1475 80M1165 88Q1135 130 1160 190L1195 188M1130 205L1165 195M1385 52Q1420 65 1430 95M1120 348L1190 335M970 486L1260 430M1150 486L1330 450M1480 486L1568 458M55 446L78 486M135 486L220 446L252 465L225 486M320 480Q310 455 345 450L360 480L400 460L415 486M510 486Q550 440 590 486M730 446Q742 458 755 446M838 446L872 486",
    ],
  },
];

const Wallpaper = () => (
  <WallpaperSvg width="1080" height="2070" viewBox="0 212 1080 2070" aria-hidden="true">
    {dots.map(([x, y, r], i) => <circle key={i} cx={x} cy={y} r={r} />)}
    {patches.map((p, i) => (
      <g key={i} transform={`translate(${p.x} ${p.y}) scale(${1 / p.sx} ${1 / p.sy})`}>
        {p.d.map((d, j) => <path key={j} d={d} />)}
      </g>
    ))}
  </WallpaperSvg>
);

/* ---------- data ---------- */

type Message = {
  text: string;
  time: string;
  sent?: boolean;
  tail?: boolean;
  layout?: Layout;
  wide?: boolean;
  gap?: number;
  quote?: { name: string; text: string };
};

const messages: Message[] = [
  { text: "I don't care... no sorry needed", time: "10:34 AM", sent: true, quote: { name: "Maria Arma", text: "Really" } },
  { text: "None of the check marks shows up... it shows\nundelivered messages", time: "10:34 AM", sent: true, wide: true, gap: 7 },
  { text: "I'm done with coffee... now I will get my clothes\ntogether and shower", time: "10:36 AM", sent: true, wide: true, gap: 7 },
  { text: "Sorry you missed it.... I had a nice hot shower", time: "10:50 AM", sent: true, layout: "stack" },
  { text: "Omg there someonne here bet me haha i said no\nthanks to filipino", time: "11:06 AM", tail: true, wide: true, gap: 27 },
  { text: "Who is there and said no to what", time: "11:06 AM", sent: true, tail: true, wide: true, gap: 27, quote: { name: "Maria Arma", text: "Omg there someonne here bet me haha i said no\nthanks to filipino" } },
  { text: "I'm in the shower... what did they bet you?", time: "11:08 AM", sent: true, layout: "stack", gap: 7 },
  { text: "Guess I'll say good night since you got busy and\nyou missed the go go go", time: "11:28 AM", sent: true, wide: true },
  { text: "R u sleeping", time: "12:06 PM", tail: true, gap: 27 },
  { text: "No", time: "12:07 PM", sent: true, tail: true, gap: 25 },
  { text: "Are you done drinking and playing on the dating\nsight", time: "12:07 PM", sent: true, wide: true },
  { text: "I want to tell u something", time: "12:08 PM", tail: true, gap: 26 },
  { text: "Then tell me", time: "12:08 PM", sent: true, tail: true, gap: 25 },
  { text: "Knock Knock ...... should I go to sleep and you can\ntell me later?", time: "12:11 PM", sent: true, wide: true },
  { text: "Are you to drunk to talk now.... lol", time: "12:14 PM", sent: true },
];

const MessageBubble = ({ text, time, sent = false, tail = false, layout = "inline", wide = false, gap = 6, quote }: Message) => {
  const lines = text.split("\n");
  const last = lines.pop();
  return (
    <Bubble $sent={sent} $wide={wide} $tail={tail} $gap={gap}>
      {tail && (
        <Tail $sent={sent} width="19" height="30" viewBox="0 0 19 30">
          <path d="M0 0H14Q21 0 18 7Q17 9 1 28.5V30H0Z" />
        </Tail>
      )}
      {quote && (
        <QuoteHolder>
          <Quote>
            <QuoteName>{quote.name}</QuoteName>
            <QuoteText $lines={quote.text.split("\n").length}>{quote.text}</QuoteText>
          </Quote>
        </QuoteHolder>
      )}
      <Body $quoted={!!quote} $sent={sent}>
        {lines.map((line) => <Line key={line}>{line}</Line>)}
        <LastRow $layout={layout} $sent={sent} $multiline={lines.length > 0}>
          <Line>{last}</Line>
          <Meta $sent={sent}>
            {time}
            {sent && <Tick />}
          </Meta>
        </LastRow>
      </Body>
    </Bubble>
  );
};

export default function App() {
  return (
    <Screen>
      <GlobalStyle />
      <TopArea>
        <StatusBar>
          <Clock>12:23</Clock>
          <StatusIcons>
            <AlarmIcon />
            <BluetoothIcon />
            <MuteIcon />
            <Network>
              <NetworkName>5G</NetworkName>
              <NetworkSuffix>
                <span>U</span>
                <span>W</span>
              </NetworkSuffix>
            </Network>
            <SignalIcon />
            <Battery>35%</Battery>
            <BatteryIcon />
          </StatusIcons>
        </StatusBar>
        <ContactBar>
          <BackIcon />
          <Avatar />
          <ContactName>Maria Arma</ContactName>
          <Actions>
            <VideoIcon />
            <PhoneIcon />
            <MoreIcon />
          </Actions>
        </ContactBar>
      </TopArea>
      <Conversation>
        <Wallpaper />
        <Messages>
          {messages.map((m, i) => <MessageBubble key={i} {...m} />)}
        </Messages>
        <Composer>
          <InputPill>
            <StickerIcon />
            <Placeholder>Message</Placeholder>
            <ClipIcon />
            <CameraIcon />
          </InputPill>
          <MicButton aria-label="Record voice message"><MicIcon /></MicButton>
        </Composer>
      </Conversation>
      <NavBar>
        <RecentsIcon />
        <HomeIcon />
        <NavBackIcon />
      </NavBar>
    </Screen>
  );
}
